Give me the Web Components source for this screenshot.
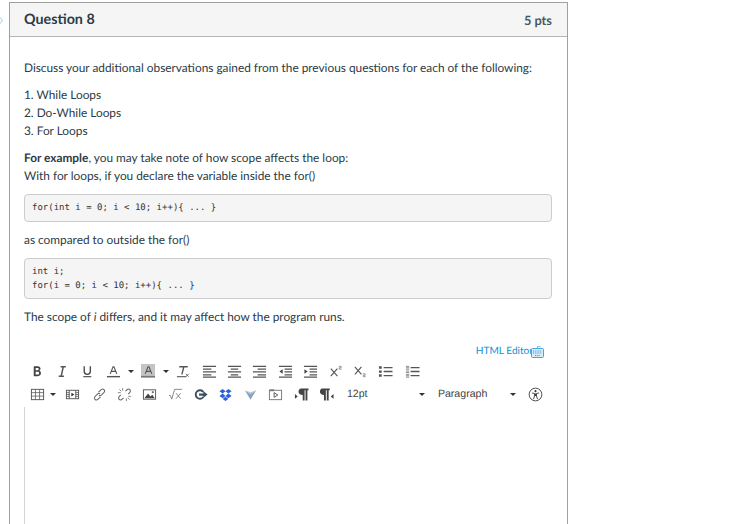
<!DOCTYPE html>
<html>
<head>
<meta charset="utf-8">
<title>Question 8</title>
<style>
  html, body { margin: 0; height: 524px; overflow: hidden; background: #fff; }
  body { font-family: Lato, "Liberation Sans", sans-serif; color: #2d3b45; text-rendering: geometricPrecision; }
  .back { position: absolute; left: 0; top: 17px; }
</style>
</head>
<body>
<svg class="back" width="4" height="7" viewBox="0 0 4 7"><path d="M0 .5 2.500 3.500 0 6.500" fill="none" stroke="#c6deee" stroke-width="1.2"/></svg>

<quiz-question heading="Question 8" points="5 pts">
  <quiz-text gap="9">Discuss your additional observations gained from the previous questions for each of the following:</quiz-text>
  <quiz-text>1. While Loops</quiz-text>
  <quiz-text>2. Do-While Loops</quiz-text>
  <quiz-text gap="9">3. For Loops</quiz-text>
  <quiz-text><b>For example</b>, you may take note of how scope affects the loop:</quiz-text>
  <quiz-text gap="9">With for loops, if you declare the variable inside the for()</quiz-text>
  <code-block style="padding-bottom:5.5px">for(int i = 0; i &lt; 10; i++){ ... }</code-block>
  <quiz-text gap="9">as compared to outside the for()</quiz-text>
  <code-block>int i;
for(i = 0; i &lt; 10; i++){ ... }</code-block>
  <quiz-text>The scope of <i>i</i> differs, and it may affect how the program runs.</quiz-text>
  <rich-editor></rich-editor>
</quiz-question>

<script>
const questionTemplate = document.createElement('template');
questionTemplate.innerHTML = `
  <style>
    :host {
      display: block;
      box-sizing: border-box;
      width: 559px;
      height: 530px;
      margin: 2px 0 0 9px;
      border: 1px solid #a0a0a0;
      border-bottom: none;
      overflow: hidden;
    }
    header {
      display: flex;
      justify-content: space-between;
      align-items: center;
      height: 33px;
      padding: 0 15px 0 14px;
      background: #f5f5f5;
      border-bottom: 1px solid #b4b4b4;
      font-weight: 700;
      font-size: 14.3px;
      color: #2d3b45;
    }
    .pts { font-size: 12.8px; font-weight: 700; color: #4a5660; }
    main { padding: 22px 15px 0 14px; }
  </style>
  <header><span class="title"></span><span class="pts"></span></header>
  <main><slot></slot></main>
`;

class QuizQuestion extends HTMLElement {
  constructor() {
    super();
    this.attachShadow({ mode: 'open' });
    this.shadowRoot.appendChild(questionTemplate.content.cloneNode(true));
    this.shadowRoot.querySelector('.title').textContent = this.getAttribute('heading');
    this.shadowRoot.querySelector('.pts').textContent = this.getAttribute('points');
  }
}

const textTemplate = document.createElement('template');
textTemplate.innerHTML = `
  <style>
    :host {
      display: block;
      font-size: 11.85px;
      line-height: 18px;
      color: #2d3b45;
    }
  </style>
  <slot></slot>
`;

class QuizText extends HTMLElement {
  constructor() {
    super();
    this.attachShadow({ mode: 'open' });
    this.shadowRoot.appendChild(textTemplate.content.cloneNode(true));
  }

  connectedCallback() {
    if (this.hasAttribute('gap')) this.style.marginBottom = this.getAttribute('gap') + 'px';
  }
}

const codeTemplate = document.createElement('template');
codeTemplate.innerHTML = `
  <style>
    :host {
      display: block;
      margin-bottom: 9px;
      padding: 7px 7px 4.5px;
      background: #f5f5f5;
      border: 1px solid #ccc;
      border-radius: 4px;
      font-family: "DejaVu Sans Mono", monospace;
      font-size: 9px;
      line-height: 13.5px;
      color: #333;
    }
    slot { white-space: pre; }
  </style>
  <slot></slot>
`;

class CodeBlock extends HTMLElement {
  constructor() {
    super();
    this.attachShadow({ mode: 'open' });
    this.shadowRoot.appendChild(codeTemplate.content.cloneNode(true));
  }
}

const lines = (rows) => rows.map(r => `M${r[0]} ${r[1]}H${r[2]}`).join('');

const ICONS = {
  bold: '<path d="M4 2.5h4.2c2 0 3 1 3 2.6 0 1-.6 1.8-1.5 2.1 1.2.3 2 1.2 2 2.5 0 1.9-1.3 3.3-3.5 3.3H4zM6 4.3v2.3h2c.9 0 1.3-.5 1.3-1.2 0-.7-.4-1.1-1.3-1.1zM6 8.3v3h2.2c1 0 1.5-.6 1.5-1.5S9.2 8.3 8.2 8.3z" fill="#444" fill-rule="evenodd"/>',
  italic: '<path d="M6 3h5.500M4 13h5.500M8.800 3 6.600 13" stroke="#555" stroke-width="1.600" fill="none"/>',
  underline: '<path d="M4.500 2.500v5.500c0 4 6.500 4 6.500 0V2.500" stroke="#444" stroke-width="1.400" fill="none"/><path d="M3.500 13.500h8.500" stroke="#555" stroke-width="1.300"/>',
  color: '<path d="M4.500 10.500 7.500 3h1l3 7.500M5.700 7.800h4.600" stroke="#555" stroke-width="1.200" fill="none"/><path d="M1 13.500h14" stroke="#555" stroke-width="1.500"/>',
  background: '<rect x="0" y="0" width="15" height="12.500" fill="#c4c4c4"/><rect x="0" y="12.500" width="15" height="2" fill="#777"/><path d="M4.500 10.500 7.500 3h1l3 7.500M5.700 7.800h4.600" stroke="#555" stroke-width="1.200" fill="none"/>',
  clear: '<path d="M3.500 3h9M8.300 3 6.300 11" stroke="#555" stroke-width="1.500" fill="none"/><path d="M1 13.500h10" stroke="#666" stroke-width="1.300"/><path d="M10.500 10.500l3 3M13.500 10.500l-3 3" stroke="#666" stroke-width="1"/>',
  alignLeft: '<path d="' + lines([[1,2.5,15],[1,5.5,10],[1,8.5,15],[1,11.5,10],[1,14,15]]) + '" stroke="#555" stroke-width="1.300"/>',
  alignCenter: '<path d="' + lines([[1,2.5,15],[4,5.5,12],[1,8.5,15],[4,11.5,12],[1,14,15]]) + '" stroke="#555" stroke-width="1.300"/>',
  alignRight: '<path d="' + lines([[1,2.5,15],[6,5.5,15],[1,8.5,15],[6,11.5,15],[1,14,15]]) + '" stroke="#555" stroke-width="1.300"/>',
  outdent: '<path d="' + lines([[1,2.5,15],[7,5.5,15],[7,8.5,15],[7,11.5,15],[1,14,15]]) + '" stroke="#555" stroke-width="1.300"/><path d="M5 5.500v5L1.500 8z" fill="#444"/>',
  indent: '<path d="' + lines([[1,2.5,15],[7,5.5,15],[7,8.5,15],[7,11.5,15],[1,14,15]]) + '" stroke="#555" stroke-width="1.300"/><path d="M1.500 5.500v5L5 8z" fill="#444"/>',
  sup: '<path d="M3 5l7 8M10 5l-7 8" stroke="#555" stroke-width="1.200"/><path d="M11.500 2.500h2.500v1.500h-2v1.500h2.500" stroke="#777" stroke-width=".8" fill="none"/>',
  sub: '<path d="M2 3l7 8M9 3l-7 8" stroke="#555" stroke-width="1.200"/><path d="M10.500 10.500h2.500V12h-2v1.500h2.500" stroke="#777" stroke-width=".8" fill="none"/>',
  bullets: '<path d="M1 2.500h3v2.500H1zM1 6.800h3v2.500H1zM1 11h3v2.500H1z" fill="#555"/><path d="M6 3.800h9.500M6 8h9.500M6 12.300h9.500" stroke="#555" stroke-width="1.400"/>',
  numbers: '<path d="M1 2.500h3.500M1 4h3.500M1 5.500h3.500M1 7.500h3.500M1 9h3.500M1 11h3.500M1 12.500h3.500M1 14h3.500" stroke="#666" stroke-width=".8"/><path d="M6 3.800h9.500M6 8h9.500M6 12.300h9.500" stroke="#555" stroke-width="1.400"/>',
  table: '<rect x="1.500" y="2.500" width="13" height="11" fill="none" stroke="#555"/><path d="M1.500 6h13M1.500 9.700h13M5.800 2.500v11M10.200 2.500v11" stroke="#555" stroke-width=".8"/>',
  media: '<rect x="1.500" y="3.500" width="13" height="9" fill="none" stroke="#555"/><path d="M4.500 3.500v9M11.500 3.500v9" stroke="#555"/><path d="M1.500 6h3M1.500 8h3M1.500 10h3M11.500 6h3M11.500 8h3M11.500 10h3" stroke="#555" stroke-width=".8"/><path d="M6.800 6v4.200L10 8z" fill="#333"/>',
  link: '<path d="M7 5.500 9.500 3c1-1 2.500-1 3.300-.2.900.9.800 2.300-.2 3.300l-2.400 2.400c-.9.800-2 .9-2.800.3M9 10.500 6.500 13c-1 1-2.500 1-3.300.2-.9-.9-.8-2.300.2-3.300l2.400-2.400c.9-.8 2-.9 2.800-.3" fill="none" stroke="#666" stroke-width="1.100"/>',
  unlink: '<path d="M9 4.500 10.500 3c1-1 2.400-1 3.200-.2.800.8.700 2.200-.2 3.100L12 7.500M7 11.500 5.500 13c-1 1-2.400 1-3.200.2-.8-.8-.7-2.200.2-3.100L4 8.500" fill="none" stroke="#666" stroke-width="1.100"/><path d="M6 1v3M1 6h3M10 15v-3M15 10h-3M2.500 2.500l2 2M13.500 13.500l-2-2" stroke="#777" stroke-width=".9"/>',
  image: '<rect x="1.500" y="3" width="13" height="10" fill="none" stroke="#555"/><path d="M2.500 12 6.500 7l2.500 3 2-1.800L13.500 12z" fill="#444"/><rect x="10.500" y="4.500" width="2" height="2" fill="#666"/>',
  sqrt: '<path d="M1 9h1.500l1.500 4 3-10.500h8" fill="none" stroke="#777" stroke-width=".9"/><path d="M8.500 6.500l5 6M13.500 6.500l-5 6" stroke="#777" stroke-width=".9"/>',
  share: '<path d="M11 10.700A4.500 4.500 0 1 1 11 5.300" fill="none" stroke="#3c4d5c" stroke-width="2"/><path d="M6.500 6.800h4.500V4.300L15.500 8 11 11.700V9.200H6.500z" fill="#3c4d5c"/>',
  dropbox: '<path d="M5 2 1.500 4.500 5 7 8 4.500zM11 2 8 4.500 11 7l3.500-2.500zM5 7 1.500 9.500 5 12l3-2.500zM11 7 8 9.500l3 2.500 3.500-2.500zM5 12.800l3 2 3-2-3-2.300z" fill="#2a62d8"/>',
  vimeo: '<path d="M2 3.500 8 13.500 14 3.500 8 7.500z" fill="#8aa3bd"/><path d="M2 3.500 8 7.500 14 3.500 8 5.500z" fill="#b5c5d6"/>',
  preview: '<rect x="1.500" y="3.500" width="13" height="10" fill="none" stroke="#777"/><path d="M1.500 3.500h5" stroke="#777" stroke-width="2"/><path d="M6.500 6v5l4-2.500z" fill="none" stroke="#555"/>',
  ltr: '<path d="M7.500 1.500h8v2h-1.200V14.500h-2V3.500h-1v11h-2V8.500C6.500 8.500 4.800 7 4.800 5 4.800 3 6 1.500 7.500 1.500z" fill="#444"/><path d="M1 7.500v5l3-2.500z" fill="#444"/>',
  rtl: '<path d="M3.200 1.500h8.300v2h-1.200V14.500h-2V3.500h-1v11h-2V8.500C2.700 8.500 1 7 1 5 1 3 2 1.500 3.200 1.500z" fill="#444"/><path d="M15.500 7.500v5l-3-2.500z" fill="#444"/>',
  a11y: '<circle cx="8" cy="8" r="6.800" fill="none" stroke="#333" stroke-width=".9"/><circle cx="8" cy="4.400" r="1.100" fill="#333"/><path d="M4.200 6.300 7 7v2.500L5.800 13M11.800 6.300 9 7v2.500l1.200 3.500" fill="none" stroke="#333" stroke-width=".9"/><path d="M7 7h2v2.500H7z" fill="#333"/>',
};

const buttonTemplate = document.createElement('template');
buttonTemplate.innerHTML = `
  <style>
    :host {
      display: flex;
      align-items: center;
      justify-content: center;
      width: 25.2px;
      height: 23px;
      flex: none;
    }
    svg { width: 15px; height: 15px; }
  </style>
  <svg viewBox="0 0 16 16"></svg>
`;

class ToolButton extends HTMLElement {
  constructor() {
    super();
    this.attachShadow({ mode: 'open' });
    this.shadowRoot.appendChild(buttonTemplate.content.cloneNode(true));
    this.shadowRoot.querySelector('svg').innerHTML = ICONS[this.getAttribute('icon')];
  }
}

const caretTemplate = document.createElement('template');
caretTemplate.innerHTML = `
  <style>
    :host {
      display: flex;
      align-items: center;
      justify-content: center;
      flex: none;
      height: 23px;
    }
    i { border: 3px solid transparent; border-top: 3px solid #333; border-bottom: 0; border-left-width: 3.5px; border-right-width: 3.5px; }
  </style>
  <i></i>
`;

class ToolCaret extends HTMLElement {
  constructor() {
    super();
    this.attachShadow({ mode: 'open' });
    this.shadowRoot.appendChild(caretTemplate.content.cloneNode(true));
    this.style.width = (this.getAttribute('width') || 10) + 'px';
  }
}

const labelTemplate = document.createElement('template');
labelTemplate.innerHTML = `
  <style>
    :host {
      display: flex;
      align-items: center;
      flex: none;
      height: 23px;
      font-family: "Liberation Sans", Arial, sans-serif;
      font-size: 10.6px;
      color: #444;
    }
  </style>
  <slot></slot>
`;

class ToolLabel extends HTMLElement {
  constructor() {
    super();
    this.attachShadow({ mode: 'open' });
    this.shadowRoot.appendChild(labelTemplate.content.cloneNode(true));
    this.style.width = this.getAttribute('width') + 'px';
    this.style.paddingLeft = (this.getAttribute('pad') || 0) + 'px';
  }
}

const editorTemplate = document.createElement('template');
editorTemplate.innerHTML = `
  <style>
    :host { display: block; margin-top: 16px; }
    .switch {
      display: flex;
      justify-content: flex-end;
      position: relative;
      padding-right: 19px;
      height: 18px;
      align-items: center;
      font-size: 10.1px;
      color: #0f8fd6;
    }
    .kbd { position: absolute; right: 8px; top: 3px; }
    .row { display: flex; align-items: center; height: 23px; margin-left: 1px; }
    .area {
      margin-top: 1px;
      height: 140px;
      border-left: 1px solid #d4d4d4;
    }
  </style>
  <div class="switch">
    <span>HTML Editor</span>
    <svg class="kbd" width="13" height="13" viewBox="0 0 13 13">
      <path d="M6.500 3V1.500h3" fill="none" stroke="#5aaee0" stroke-width=".8"/>
      <rect x=".5" y="3.500" width="12" height="9" rx="1" fill="#d8ecf8" stroke="#4aa3dc"/>
      <path d="M2 6h9M2 8h9M4 10.500h5" stroke="#3a9ad8" stroke-width="1" stroke-dasharray="1 .8"/>
    </svg>
  </div>
  <div class="row">
    <tool-button icon="bold"></tool-button>
    <tool-button icon="italic"></tool-button>
    <tool-button icon="underline"></tool-button>
    <tool-button icon="color"></tool-button>
    <tool-caret width="10"></tool-caret>
    <tool-button icon="background"></tool-button>
    <tool-caret width="10"></tool-caret>
    <tool-button icon="clear" style="width:26px"></tool-button>
    <tool-button icon="alignLeft"></tool-button>
    <tool-button icon="alignCenter"></tool-button>
    <tool-button icon="alignRight"></tool-button>
    <tool-button icon="outdent"></tool-button>
    <tool-button icon="indent"></tool-button>
    <tool-button icon="sup"></tool-button>
    <tool-button icon="sub"></tool-button>
    <tool-button icon="bullets"></tool-button>
    <tool-button icon="numbers" style="width:28px"></tool-button>
  </div>
  <div class="row">
    <tool-button icon="table" style="width:24px"></tool-button>
    <tool-caret width="8"></tool-caret>
    <tool-button icon="media" style="width:30px"></tool-button>
    <tool-button icon="link"></tool-button>
    <tool-button icon="unlink"></tool-button>
    <tool-button icon="image"></tool-button>
    <tool-button icon="sqrt"></tool-button>
    <tool-button icon="share"></tool-button>
    <tool-button icon="dropbox"></tool-button>
    <tool-button icon="vimeo"></tool-button>
    <tool-button icon="preview"></tool-button>
    <tool-button icon="ltr"></tool-button>
    <tool-button icon="rtl"></tool-button>
    <tool-label width="70" pad="8">12pt</tool-label>
    <tool-caret width="10"></tool-caret>
    <tool-label width="70" pad="11">Paragraph</tool-label>
    <tool-caret width="10"></tool-caret>
    <tool-button icon="a11y" style="width:35px"></tool-button>
  </div>
  <div class="area"></div>
`;

class RichEditor extends HTMLElement {
  constructor() {
    super();
    this.attachShadow({ mode: 'open' });
    this.shadowRoot.appendChild(editorTemplate.content.cloneNode(true));
  }
}

customElements.define('tool-button', ToolButton);
customElements.define('tool-caret', ToolCaret);
customElements.define('tool-label', ToolLabel);
customElements.define('rich-editor', RichEditor);
customElements.define('code-block', CodeBlock);
customElements.define('quiz-text', QuizText);
customElements.define('quiz-question', QuizQuestion);
</script>
</body>
</html>
